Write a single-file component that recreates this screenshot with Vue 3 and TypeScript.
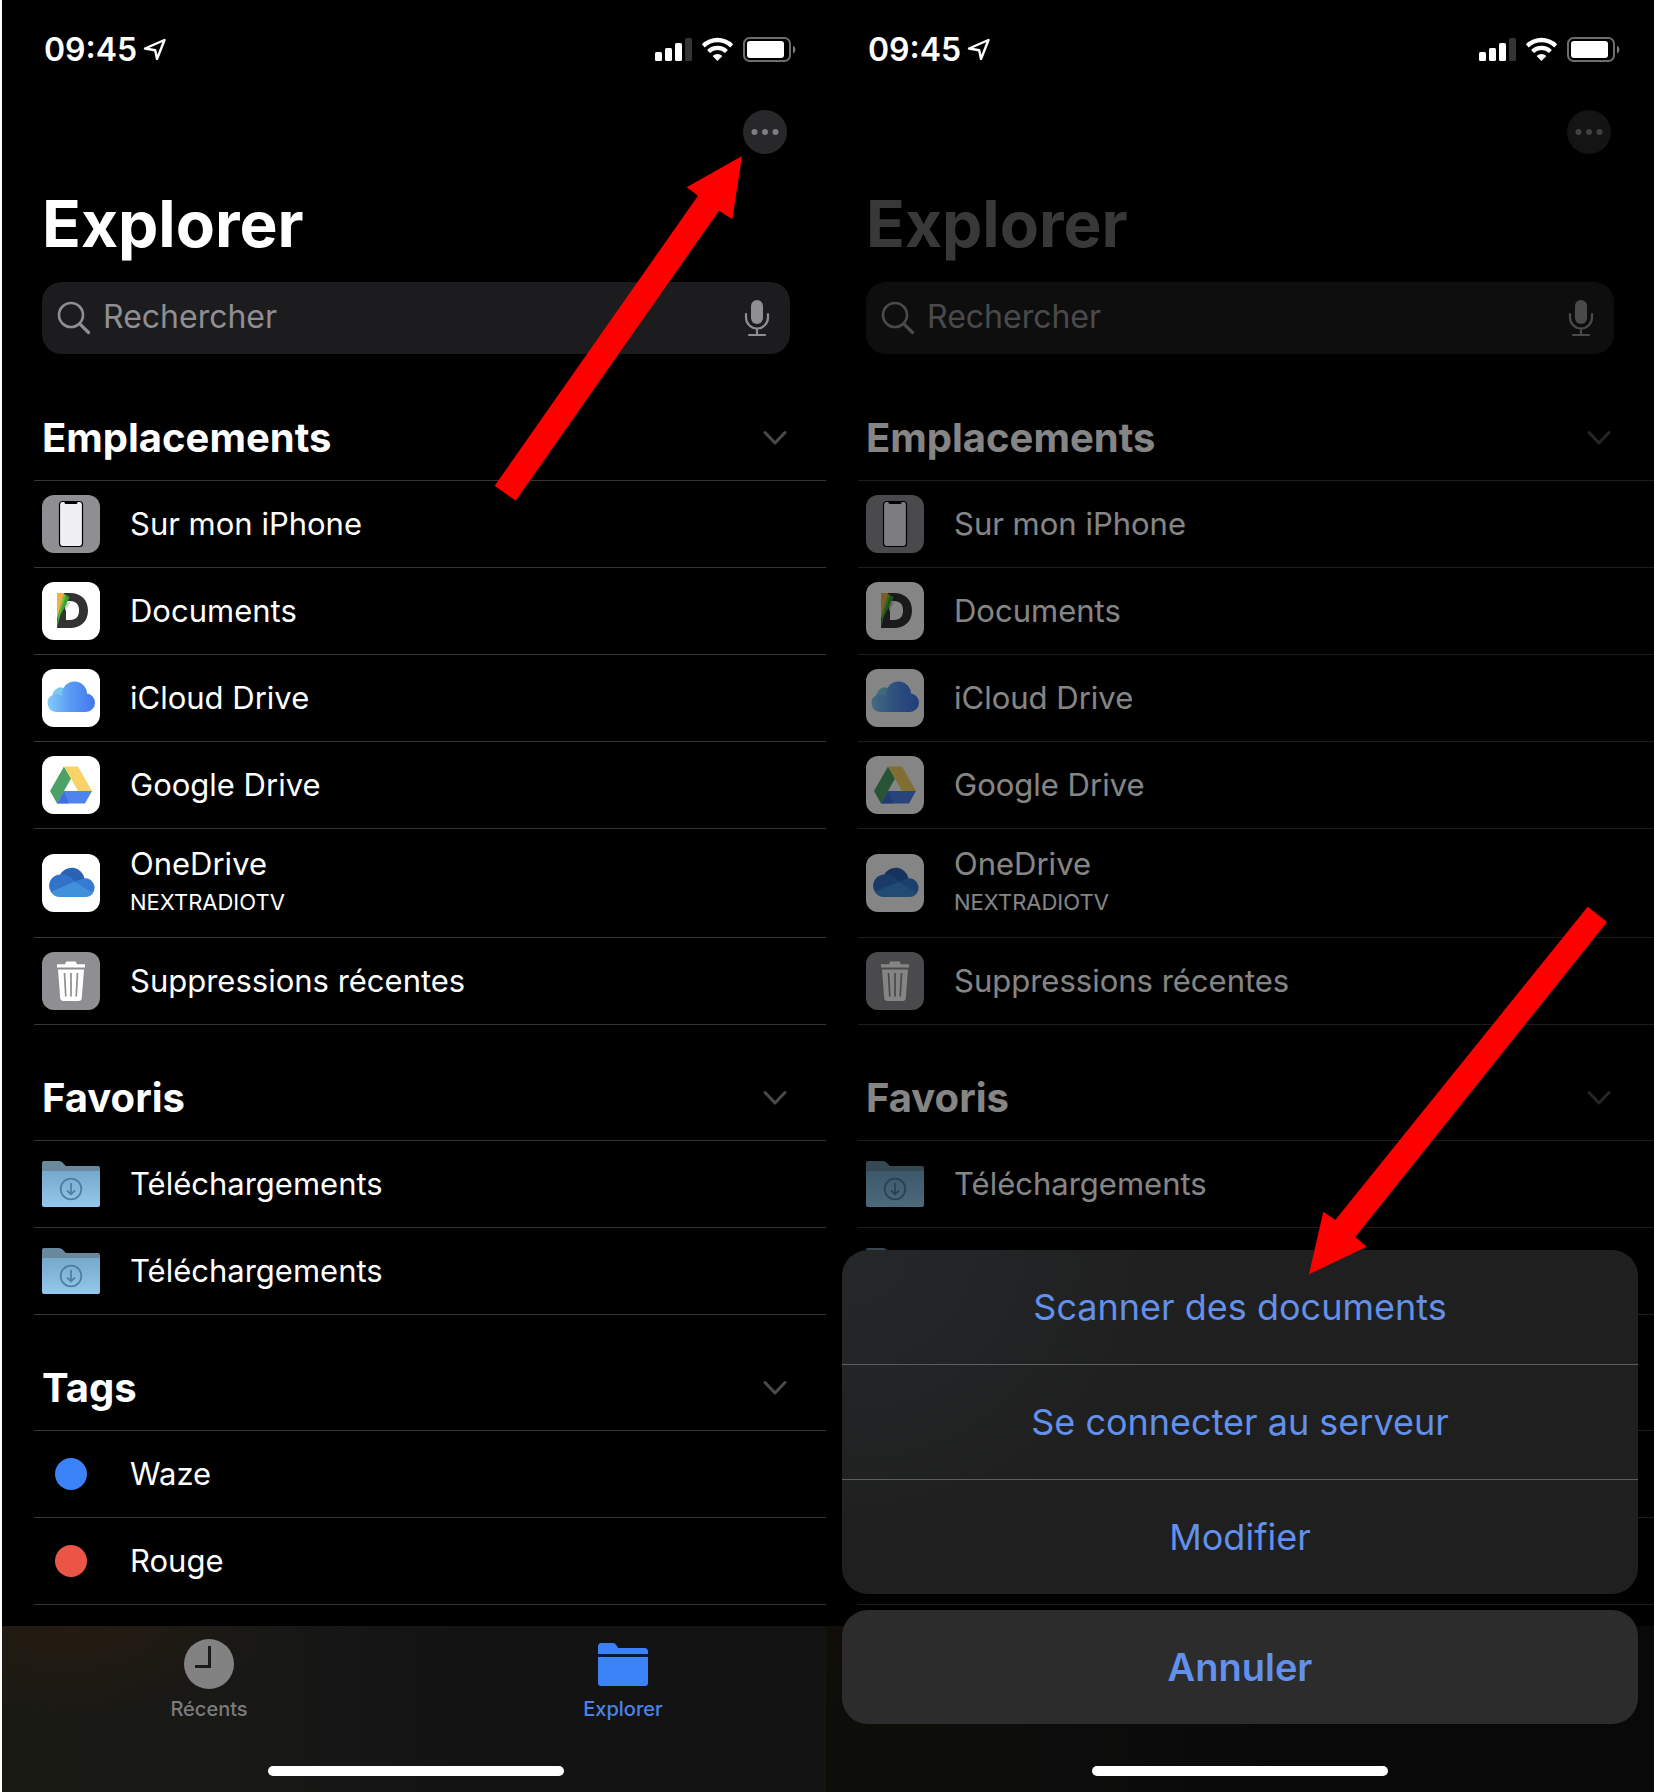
<script setup lang="ts">
type IconName = 'phone' | 'documents' | 'icloud' | 'gdrive' | 'onedrive' | 'trash' | 'folder' | 'dot'

interface Row {
  label: string
  icon: IconName
  detail?: string
  color?: string
}

interface Section {
  title: string
  rows: Row[]
}

interface Phone {
  id: string
  sheetOpen: boolean
}

const phones: Phone[] = [
  { id: 'browse', sheetOpen: false },
  { id: 'actions', sheetOpen: true },
]

const sections: Section[] = [
  {
    title: 'Emplacements',
    rows: [
      { label: 'Sur mon iPhone', icon: 'phone' },
      { label: 'Documents', icon: 'documents' },
      { label: 'iCloud Drive', icon: 'icloud' },
      { label: 'Google Drive', icon: 'gdrive' },
      { label: 'OneDrive', icon: 'onedrive', detail: 'NEXTRADIOTV' },
      { label: 'Suppressions récentes', icon: 'trash' },
    ],
  },
  {
    title: 'Favoris',
    rows: [
      { label: 'Téléchargements', icon: 'folder' },
      { label: 'Téléchargements', icon: 'folder' },
    ],
  },
  {
    title: 'Tags',
    rows: [
      { label: 'Waze', icon: 'dot', color: '#3b82f7' },
      { label: 'Rouge', icon: 'dot', color: '#eb5545' },
    ],
  },
]

const actions: string[] = ['Scanner des documents', 'Se connecter au serveur', 'Modifier']
</script>

<template>
  <main class="stage">
    <article v-for="phone in phones" :key="phone.id" class="phone" :class="{ dimmed: phone.sheetOpen }">
      <div class="screen">
        <header class="status">
          <span class="clock">09:45</span>
          <svg class="location" width="24" height="24" viewBox="0 0 24 24" aria-hidden="true">
            <path d="M2 10.500 21.500 2 14 21 12.200 12.300Z" fill="none" stroke="#fff" stroke-width="2.400" stroke-linejoin="round" />
          </svg>
          <svg class="signals" width="142" height="26" viewBox="0 0 142 26" aria-hidden="true">
            <g fill="#fff">
              <rect x="0" y="15" width="7" height="9" rx="1.500" />
              <rect x="10" y="11" width="7" height="13" rx="1.500" />
              <rect x="20" y="6" width="7" height="18" rx="1.500" />
              <rect x="30" y="1" width="7" height="23" rx="1.500" fill="#343434" />
              <path d="M46.800 7.200A22.500 22.500 0 0 1 78.200 7.200L75.300 10.400A18.500 18.500 0 0 0 49.700 10.400Z" />
              <path d="M52.100 12.900A15 15 0 0 1 72.900 12.900L70 16A10.800 10.800 0 0 0 55 16Z" />
              <path d="M57.600 18.900A7.500 7.500 0 0 1 67.400 18.900L62.500 24Z" />
              <rect x="92" y="4" width="37" height="17" rx="3" />
              <path d="M138 8.500A4.500 4.500 0 0 1 138 16.500Z" fill="#7c7c7c" />
            </g>
            <rect x="89" y="1" width="46" height="23" rx="5.500" fill="none" stroke="#6e6e6e" stroke-width="2" />
          </svg>
        </header>

        <nav class="toolbar">
          <button class="more" type="button" aria-label="Plus">
            <svg width="44" height="44" viewBox="0 0 44 44" aria-hidden="true">
              <circle cx="11.500" cy="22" r="3" />
              <circle cx="22" cy="22" r="3" />
              <circle cx="32.500" cy="22" r="3" />
            </svg>
          </button>
        </nav>

        <h1 class="title">Explorer</h1>

        <div class="search">
          <label :for="`search-${phone.id}`" aria-label="Rechercher">
            <svg width="34" height="34" viewBox="0 0 34 34" fill="none" stroke="#8e8e93" stroke-width="2.600" stroke-linecap="round" aria-hidden="true">
              <circle cx="14" cy="14" r="12" />
              <path d="M22.800 22.800 31.500 31.500" stroke-width="3.200" />
            </svg>
          </label>
          <input :id="`search-${phone.id}`" type="search" placeholder="Rechercher" />
          <button class="mic" type="button" aria-label="Dictée">
            <svg width="26" height="38" viewBox="0 0 26 38" aria-hidden="true">
              <rect x="7" y="1" width="12" height="24" rx="6" fill="#8e8e93" />
              <path d="M2 15V18.500A11 11 0 0 0 24 18.500V15M13 29.500V35.500M5 36H21" fill="none" stroke="#8e8e93" stroke-width="2.200" stroke-linecap="round" />
            </svg>
          </button>
        </div>

        <div class="sections">
          <section v-for="section in sections" :key="section.title">
            <div class="section-head">
              <h2>{{ section.title }}</h2>
              <button class="fold" type="button" :aria-label="`Replier ${section.title}`">
                <svg width="24" height="16" viewBox="0 0 24 16" fill="none" stroke="#4a4a4c" stroke-width="3" stroke-linecap="round" stroke-linejoin="round" aria-hidden="true">
                  <path d="M2 2.500 12 13 22 2.500" />
                </svg>
              </button>
            </div>
            <ul>
              <li v-for="(row, index) in section.rows" :key="index">
                <button class="row" :class="{ tall: row.detail }" type="button">
                  <svg class="icon" width="58" height="58" viewBox="0 0 58 58" aria-hidden="true">
                    <g v-if="row.icon === 'phone'">
                      <rect width="58" height="58" rx="12" fill="#8e8e93" />
                      <rect x="17.500" y="6.500" width="23" height="45" rx="3" fill="#efeff4" stroke="#000" stroke-width="1.200" />
                      <path d="M22.500 6.500H35.500V7.500Q35.500 9 34 9H24Q22.500 9 22.500 7.500Z" />
                    </g>
                    <g v-else-if="row.icon === 'documents'">
                      <rect width="58" height="58" rx="12" fill="#fff" />
                      <path d="M15 11H28C39 11 46 18 46 28.500S39 46 28 46H15ZM24 19V38H28C34 38 37 34.500 37 28.500S34 19 28 19Z" fill="#333" fill-rule="evenodd" />
                      <path d="M23 22 29 19 23 29Z" fill="#ccc" />
                      <path d="M15 46 16 30 22 12 27.500 15 24 23 18 34Z" fill="#37a62d" />
                      <path d="M15 44 21 11.500 24 13 19 28Z" fill="#74c043" />
                      <path d="M15 11H22L15 37Z" fill="#eeb244" />
                    </g>
                    <g v-else-if="row.icon === 'icloud'">
                      <defs>
                        <linearGradient :id="`icloud-${phone.id}`" x1="0" y1="0" x2="1" y2="0">
                          <stop offset="0" stop-color="#83ccf8" />
                          <stop offset="0.450" stop-color="#5a9df3" />
                          <stop offset="1" stop-color="#4476ef" />
                        </linearGradient>
                      </defs>
                      <rect width="58" height="58" rx="12" fill="#fff" />
                      <path d="M14 43A9 9 0 0 1 10.500 26A8.500 8.500 0 0 1 21.500 19A12.500 12.500 0 0 1 45 24.500A9.300 9.300 0 0 1 44 43Z" :fill="`url(#icloud-${phone.id})`" />
                      <path d="M10.500 26A8.500 8.500 0 0 1 21.500 19Q19.500 23 20.500 27Q15 24 10.500 26Z" fill="#8fdbe8" opacity="0.500" />
                    </g>
                    <g v-else-if="row.icon === 'gdrive'">
                      <rect width="58" height="58" rx="12" fill="#fff" />
                      <path d="M22 10.500 29 22.500 15 47.500 8 35Z" fill="#4ca166" />
                      <path d="M22 10.500H36L50 35H36Z" fill="#f8d466" />
                      <path d="M22 35H50L43 47.500H15Z" fill="#4f83ee" />
                      <path d="M22 35 27 47.500H15Z" fill="#3b66d8" opacity="0.700" />
                    </g>
                    <g v-else-if="row.icon === 'onedrive'">
                      <rect width="58" height="58" rx="12" fill="#fff" />
                      <path d="M18 21A13 13 0 0 1 42.500 24.500L34 31Z" fill="#2a62b4" />
                      <path d="M9 38A11.300 11.300 0 0 1 18 20.500Q23 19.500 28 23L35 28 12 41Z" fill="#3272c8" />
                      <path d="M32 28 42 24.300A9.500 9.500 0 0 1 50.500 39.500Z" fill="#357bd3" />
                      <path d="M9 37.800 32.500 27.800 51 39Q48.500 43 43.500 43H18Q12 43 9 37.800Z" fill="#4090da" />
                    </g>
                    <g v-else-if="row.icon === 'trash'">
                      <rect width="58" height="58" rx="12" fill="#8e8e93" />
                      <path d="M15 12.200H23L24.200 9.500H33.800L35 12.200H43V15.500H15Z" fill="#fff" />
                      <path d="M16 17.500H42L39.800 46Q39.600 49 36.500 49H21.500Q18.400 49 18.200 46Z" fill="#fff" />
                      <path d="M22.500 21 23.800 44.500M29 21V44.500M35.500 21 34.200 44.500" stroke="#8e8e93" stroke-width="1.700" />
                    </g>
                    <g v-else-if="row.icon === 'folder'">
                      <defs>
                        <linearGradient :id="`folder-${phone.id}-${index}`" x1="0" y1="0" x2="0" y2="1">
                          <stop offset="0" stop-color="#76a9cc" />
                          <stop offset="1" stop-color="#93c9ec" />
                        </linearGradient>
                      </defs>
                      <path d="M0 8Q0 6 2 6H17Q19 6 20.500 7.500L24 11H56Q58 11 58 13V20H0Z" fill="#698a9d" />
                      <path d="M0 16H58V50Q58 52 56 52H2Q0 52 0 50Z" :fill="`url(#folder-${phone.id}-${index})`" />
                      <g fill="none" stroke="#4f7f9f" stroke-width="1.800">
                        <circle cx="29" cy="34" r="10.300" />
                        <path d="M29 28V39M25 35.500 29 39.300 33 35.500" />
                      </g>
                    </g>
                    <circle v-else cx="29" cy="29" r="16" :fill="row.color" />
                  </svg>
                  <span class="text">
                    <span class="label">{{ row.label }}</span>
                    <span v-if="row.detail" class="detail">{{ row.detail }}</span>
                  </span>
                </button>
              </li>
            </ul>
          </section>
        </div>

        <footer class="tabs">
          <button class="tab" type="button">
            <svg width="50" height="50" viewBox="0 0 50 50" aria-hidden="true">
              <circle cx="25" cy="25" r="25" fill="#828282" />
              <path d="M25.500 7V27.500H11" fill="none" stroke="#1a1a18" stroke-width="3" />
            </svg>
            <span>Récents</span>
          </button>
          <button class="tab active" type="button">
            <svg width="50" height="50" viewBox="0 0 50 50" fill="#3b82f7" aria-hidden="true">
              <path d="M0 15V7.500Q0 4 3.500 4H15Q17 4 18.200 6L20.200 9H46.500Q50 9 50 12.500V15Z" />
              <path d="M0 18H50V44Q50 47 47 47H3Q0 47 0 44Z" />
              <rect y="15" width="50" height="3" fill="#071a38" />
            </svg>
            <span>Explorer</span>
          </button>
        </footer>

        <template v-if="phone.sheetOpen">
          <div class="veil"></div>
          <div class="sheet" role="dialog" aria-label="Actions">
            <div class="group">
              <button v-for="action in actions" :key="action" type="button">{{ action }}</button>
            </div>
            <button class="cancel" type="button">Annuler</button>
          </div>
        </template>

        <span class="home"></span>
      </div>

      <svg v-if="!phone.sheetOpen" class="arrow to-menu" width="248" height="346" viewBox="0 0 248 346" aria-hidden="true">
        <path d="M248 0 192.700 31.300 204 39.700 0.700 329.700 21.700 344.700 225 54.700 238.300 63.300Z" />
      </svg>
      <svg v-else class="arrow to-scan" width="298" height="369" viewBox="0 0 298 369" aria-hidden="true">
        <path d="M0 368.300 14.300 305.700 26.300 314 278.700 0.700 298 16 46.300 331 57.700 340.700Z" />
      </svg>
    </article>
  </main>
</template>

<style>
body {
  margin: 0;
  background: #fff;
}
</style>

<style scoped>
* {
  box-sizing: border-box;
}

button {
  padding: 0;
  border: 0;
  background: none;
  color: inherit;
  font: inherit;
}

svg {
  display: block;
  flex: none;
}

.stage {
  display: grid;
  grid-template-columns: 206fr 207fr;
  min-height: 100vh;
  padding: 0 2px;
  font-family: Inter, "Liberation Sans", sans-serif;
  color: #fff;
}

.phone {
  position: relative;
  display: flex;
  min-width: 0;
  overflow: hidden;
  background: #000;
}

.screen {
  position: relative;
  flex: 1;
  display: flex;
  flex-direction: column;
  min-width: 0;
}

.phone:not(.dimmed) .screen {
  margin-right: -4px;
}

.status {
  position: relative;
  z-index: 2;
  display: flex;
  align-items: center;
  height: 100px;
  padding: 0 33px 0 42px;
}

.clock {
  font-size: 32px;
  font-weight: 600;
  line-height: 40px;
}

.location {
  margin-left: 6px;
}

.signals {
  margin-left: auto;
}

.toolbar {
  display: flex;
  justify-content: flex-end;
  padding: 10px 43px 0 40px;
}

.more {
  width: 44px;
  height: 44px;
  border-radius: 50%;
  background: #28282a;
}

.more svg {
  fill: #7e7e82;
}

.title {
  margin: 30px 40px 0;
  font-size: 64px;
  font-weight: 700;
  line-height: 80px;
}

.dimmed .title {
  color: #6c6c6c;
}

.search {
  display: flex;
  align-items: center;
  height: 72px;
  margin: 18px 40px 0;
  padding: 0 20px 0 15px;
  border-radius: 20px;
  background: #1c1c1e;
}

.search input {
  flex: 1;
  min-width: 0;
  height: 72px;
  margin: 0;
  padding: 0 0 4px 12px;
  border: 0;
  outline: 0;
  background: none;
  color: #fff;
  font-family: inherit;
  font-size: 32px;
}

.search input::placeholder {
  color: #8e8e93;
  opacity: 1;
}

.sections {
  margin-top: 11px;
}

.section-head {
  display: flex;
  align-items: flex-end;
  justify-content: space-between;
  height: 116px;
  margin-left: 32px;
  padding: 0 43px 18px 8px;
  border-bottom: 1px solid #363638;
}

.section-head h2 {
  margin: 0;
  font-size: 40px;
  font-weight: 700;
  line-height: 48px;
}

.fold {
  display: flex;
  align-items: center;
  height: 48px;
}

ul {
  margin: 0;
  padding: 0;
  list-style: none;
}

li {
  margin-left: 32px;
  border-bottom: 1px solid #363638;
}

.row {
  display: flex;
  align-items: center;
  gap: 30px;
  width: 100%;
  height: 86px;
  padding-left: 8px;
  text-align: left;
}

.row.tall {
  height: 108px;
}

.text {
  display: flex;
  flex-direction: column;
  gap: 2px;
}

.label {
  font-size: 31px;
  line-height: 36px;
}

.detail {
  font-size: 22px;
  line-height: 36px;
}

.tabs {
  display: grid;
  grid-template-columns: 1fr 1fr;
  height: 166px;
  margin-top: auto;
  background: radial-gradient(ellipse 200px 90px at 70px 0, #241b11, transparent), linear-gradient(90deg, #1a1a14, #181817 30%, #131313 55%);
}

.tab {
  display: flex;
  flex-direction: column;
  align-items: center;
  gap: 8px;
  padding-top: 13px;
  color: #7c7c7c;
  font-size: 20px;
  font-weight: 500;
  line-height: 24px;
}

.tab.active {
  color: #4a84e8;
}

.home {
  position: absolute;
  bottom: 16px;
  left: 50%;
  width: 296px;
  height: 10px;
  border-radius: 5px;
  background: #fff;
  transform: translateX(-50%);
}

.veil {
  position: absolute;
  inset: 0;
  background: rgba(0, 0, 0, 0.480);
}

.sheet {
  position: absolute;
  right: 16px;
  bottom: 68px;
  left: 16px;
  display: flex;
  flex-direction: column;
  gap: 16px;
  color: #6290ea;
  font-size: 36px;
  line-height: 48px;
}

.group {
  display: flex;
  flex-direction: column;
  overflow: hidden;
  border-radius: 26px;
  background: radial-gradient(ellipse 340px 300px at 0 0, #25282a, transparent), #1f1f1f;
}

.group button {
  height: 114px;
}

.group button + button {
  height: 115px;
  border-top: 1px solid #5c5d5e;
}

.cancel {
  height: 114px;
  border-radius: 26px;
  background: #2c2c2c;
  font-size: 38px;
  font-weight: 600;
}

.arrow {
  position: absolute;
  z-index: 3;
  fill: #f00;
}

.to-menu {
  top: 156px;
  right: 84px;
}

.to-scan {
  top: 906px;
  right: 47px;
}
</style>
